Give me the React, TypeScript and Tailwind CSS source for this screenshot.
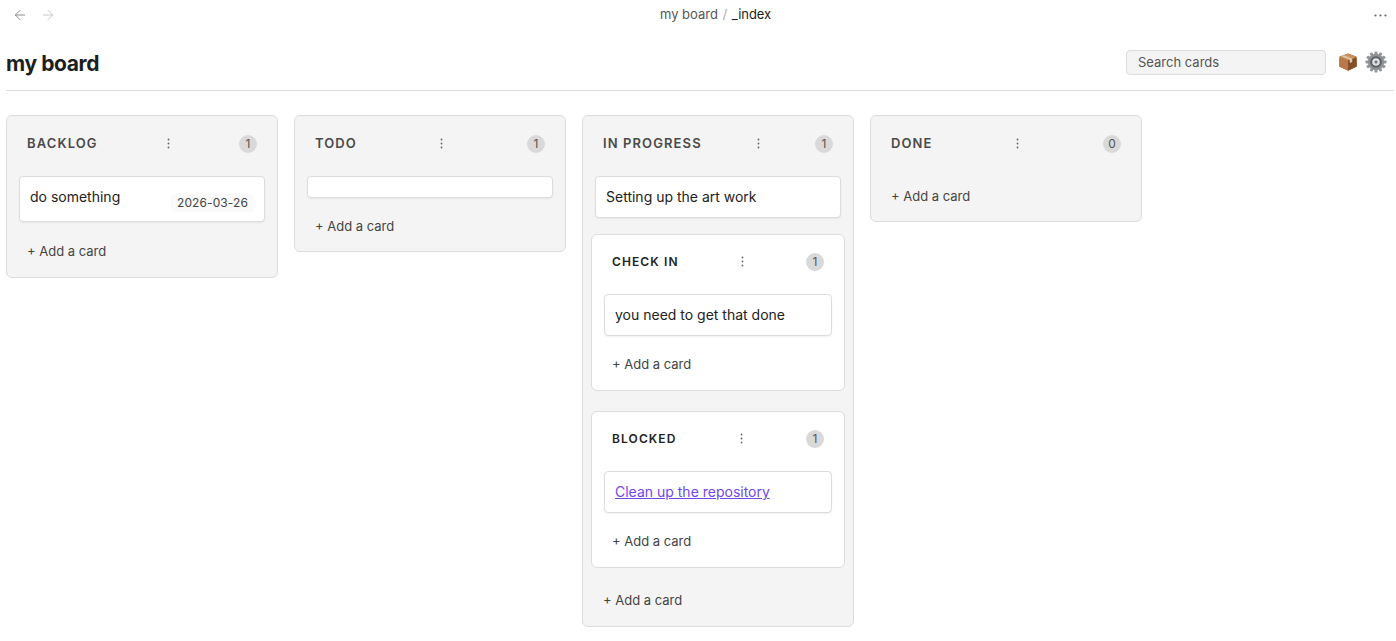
import { ArrowLeft, ArrowRight } from 'lucide-react'

type CardData = {
  title: string
  date?: string
  link?: boolean
  empty?: boolean
}

type Lane = {
  name: string
  count: number
  cards: CardData[]
  children?: Lane[]
  addGap: string
  bottom: string
}

const lanes: Lane[] = [
  { name: 'BACKLOG', count: 1, cards: [{ title: 'do something', date: '2026-03-26' }], addGap: 'mt-[20px]', bottom: 'pb-[17px]' },
  { name: 'TODO', count: 1, cards: [{ title: '', empty: true }], addGap: 'mt-[19px]', bottom: 'pb-[16px]' },
  {
    name: 'IN PROGRESS',
    count: 1,
    cards: [{ title: 'Setting up the art work' }],
    children: [
      { name: 'CHECK IN', count: 1, cards: [{ title: 'you need to get that done' }], addGap: '', bottom: '' },
      { name: 'BLOCKED', count: 1, cards: [{ title: 'Clean up the repository', link: true }], addGap: '', bottom: '' },
    ],
    addGap: 'mt-[23px]',
    bottom: 'pb-[17px]',
  },
  { name: 'DONE', count: 0, cards: [], addGap: 'mt-[11px]', bottom: 'pb-[16px]' },
]

function PackageIcon() {
  return (
    <svg width="20" height="20" viewBox="0 0 20 20">
      <path d="M10 1.5 18.4 4.6 18.8 14.6 10 18.8 1.2 14.6 1.6 4.6z" fill="#a9683a" />
      <path d="M1.4 5 10 8.4v10.4l-8.8-4.2z" fill="#b8784a" />
      <path d="M18.6 5 10 8.4v10.4l8.8-4.2z" fill="#83502b" />
      <path d="M10 1.5 18.6 5 10 8.4 1.4 5z" fill="#c9925f" />
      <path d="M5.6 3.2 14.2 6.7v3.4l-2.4 1V7.6L3.4 4.2z" fill="#dfcbb0" />
    </svg>
  )
}

function GearIcon() {
  const teeth = [0, 30, 60, 90, 120, 150, 180, 210, 240, 270, 300, 330]
  return (
    <svg width="22" height="22" viewBox="0 0 22 22">
      {teeth.map((angle) => (
        <rect key={angle} x="9.5" y="0.5" width="3" height="5" rx="0.8" fill="#94989d" transform={`rotate(${angle} 11 11)`} />
      ))}
      <circle cx="11" cy="11" r="8.2" fill="#8e9297" />
      <circle cx="11" cy="11" r="5.8" fill="#5a5f65" />
      <circle cx="11" cy="11" r="3.8" fill="#e0e3e6" />
      <circle cx="11" cy="11" r="1.5" fill="#6c7177" />
    </svg>
  )
}

function Card({ card }: { card: CardData }) {
  if (card.empty) {
    return <div className="h-[22px] rounded-[4px] border border-[#dcdcdc] bg-white shadow-[0_1px_2px_rgba(0,0,0,0.06)]" />
  }

  return (
    <div className={`rounded-[4px] border border-[#dcdcdc] bg-white px-[10px] pt-[10px] shadow-[0_1px_2px_rgba(0,0,0,0.06)] ${card.date ? 'h-[46px]' : 'h-[42px]'}`}>
      <div className="flex items-start justify-between">
        {card.link ? (
          <a href="#" className="text-[14px] leading-[20px] text-[#7047eb] underline">
            {card.title}
          </a>
        ) : (
          <span className="text-[14px] leading-[20px] text-[#222222]">{card.title}</span>
        )}
        {card.date && (
          <span className="mt-[7px] rounded-[4px] bg-[#fafafa] px-[6px] text-[12px] leading-[18px] tracking-[0.1px] text-[#444444]">
            {card.date}
          </span>
        )}
      </div>
    </div>
  )
}

function LaneHeader({ lane, nested }: { lane: Lane; nested?: boolean }) {
  return (
    <div className="flex h-[18px] items-center justify-between px-[8px]">
      <span className={`font-semibold leading-[18px] tracking-[1.1px] ${nested ? 'mt-[1px] text-[12px] text-[#222222]' : 'text-[13px] text-[#4a4a4a]'}`}>
        {lane.name}
      </span>
      <svg width="3" height="11" viewBox="0 0 3 11" className="mt-[1px]">
        <circle cx="1.5" cy="1.5" r="0.9" fill="#666666" />
        <circle cx="1.5" cy="5.5" r="0.9" fill="#666666" />
        <circle cx="1.5" cy="9.5" r="0.9" fill="#666666" />
      </svg>
      <span className="mt-[1px] flex h-[18px] w-[18px] items-center justify-center rounded-full bg-[#d9d9d9] text-[12px] text-[#555555]">
        {lane.count}
      </span>
    </div>
  )
}

function AddCard() {
  return <div className="pl-[8px] text-[13px] leading-[18px] text-[#444444]">+ Add a card</div>
}

function NestedLane({ lane }: { lane: Lane }) {
  return (
    <div className="h-[157px] rounded-[6px] border border-[#dcdcdc] bg-white px-[12px] pt-[17px]">
      <LaneHeader lane={lane} nested />
      <div className="mt-[24px]">
        {lane.cards.map((card) => (
          <Card key={card.title} card={card} />
        ))}
      </div>
      <div className="mt-[19px]">
        <AddCard />
      </div>
    </div>
  )
}

function Column({ lane }: { lane: Lane }) {
  return (
    <div className={`w-[272px] rounded-[6px] border border-[#dcdcdc] bg-[#f4f4f4] px-[12px] pt-[18px] ${lane.bottom}`}>
      <LaneHeader lane={lane} />
      <div className="mt-[24px] flex flex-col">
        {lane.cards.map((card) => (
          <Card key={card.title || 'empty'} card={card} />
        ))}
      </div>
      {lane.children && (
        <div className="-mx-[4px] mt-[16px] flex flex-col gap-[20px]">
          {lane.children.map((child) => (
            <NestedLane key={child.name} lane={child} />
          ))}
        </div>
      )}
      <div className={lane.addGap}>
        <AddCard />
      </div>
    </div>
  )
}

export default function App() {
  return (
    <div className="h-[641px] overflow-hidden bg-white font-['Inter','Liberation_Sans',sans-serif]">
      <div className="relative flex h-[30px] items-center justify-between pl-[12px] pr-[9px]">
        <div className="flex items-center gap-[12px]">
          <ArrowLeft size={16} strokeWidth={1.5} className="text-[#8a8a8a]" />
          <ArrowRight size={16} strokeWidth={1.5} className="text-[#c8c8c8]" />
        </div>
        <div className="absolute left-[660px] top-[4px] text-[13px] leading-[20px] tracking-[-0.02px] text-[#555555]">
          my board <span className="mx-[1px] text-[#aaaaaa]">/</span> <span className="text-[#222222]">_index</span>
        </div>
        <svg width="13" height="3" viewBox="0 0 13 3">
          <circle cx="1.5" cy="1.5" r="1.1" fill="#666666" />
          <circle cx="6.5" cy="1.5" r="1.1" fill="#666666" />
          <circle cx="11.5" cy="1.5" r="1.1" fill="#666666" />
        </svg>
      </div>

      <div className="ml-[6px] mr-[2px] flex h-[61px] items-center justify-between border-b border-[#dcdcdc] pr-[7px] pt-[4px]">
        <h1 className="mt-[3px] text-[21px] font-bold leading-[30px] tracking-[-0.4px] text-[#1e1e1e]">my board</h1>
        <div className="flex items-center">
          <input
            placeholder="Search cards"
            className="h-[25px] w-[200px] rounded-[4px] border border-[#dcdcdc] bg-[#f4f4f4] px-[11px] text-[13px] outline-none placeholder:text-[#555555]"
          />
          <div className="ml-[12px] flex items-center gap-[7px]">
            <PackageIcon />
            <GearIcon />
          </div>
        </div>
      </div>

      <div className="mt-[24px] flex items-start gap-[16px] px-[6px]">
        {lanes.map((lane) => (
          <Column key={lane.name} lane={lane} />
        ))}
      </div>
    </div>
  )
}
